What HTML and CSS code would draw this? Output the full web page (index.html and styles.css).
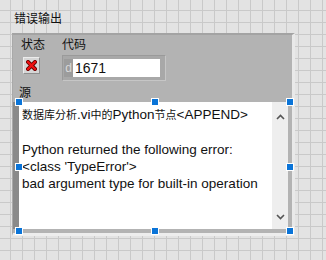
FILE: index.html
```html
<!DOCTYPE html>
<html lang="zh">
<head>
  <meta charset="UTF-8" />
  <title>错误输出</title>
  <link rel="stylesheet" href="styles.css">
</head>
<body>
  <div class="title">错误输出</div>

  <div class="cluster">
    <div class="top-row">
      <div class="field status">
        <div class="label">状态</div>
        <div class="bool">
          <svg width="11" height="11" viewBox="0 0 11 11">
            <path d="M2 2 L9 9 M9 2 L2 9" stroke="#5a0000" stroke-width="4" stroke-linecap="square"/>
            <path d="M2 2 L9 9 M9 2 L2 9" stroke="#ee1010" stroke-width="2.4" stroke-linecap="square"/>
          </svg>
        </div>
      </div>
      <div class="field code">
        <div class="label">代码</div>
        <div class="numeric">
          <span class="radix">d</span>
          <span class="value">1671</span>
        </div>
      </div>
    </div>

    <div class="label source-label">源</div>
    <div class="source">
      <div class="text">
        <div><span class="cjk">数据库分析</span>.vi<span class="cjk">中的</span>Python<span class="cjk">节点</span>&lt;APPEND&gt;</div>
        <div>&nbsp;</div>
        <div>Python returned the following error:</div>
        <div>&lt;class 'TypeError'&gt;</div>
        <div>bad argument type for built-in operation</div>
      </div>
      <div class="scroll">
        <svg width="9" height="6" viewBox="0 0 9 6"><path d="M1 5 L4.5 1.5 L8 5" fill="none" stroke="#555" stroke-width="1.6"/></svg>
        <svg width="9" height="6" viewBox="0 0 9 6"><path d="M1 1 L4.5 4.5 L8 1" fill="none" stroke="#555" stroke-width="1.6"/></svg>
      </div>

      <span class="handle h-tl"></span>
      <span class="handle h-tm"></span>
      <span class="handle h-tr"></span>
      <span class="handle h-ml"></span>
      <span class="handle h-mr"></span>
      <span class="handle h-bl"></span>
      <span class="handle h-bm"></span>
      <span class="handle h-br"></span>
    </div>
  </div>
</body>
</html>
```

FILE: styles.css
```css
body {
  margin: 0;
  width: 326px;
  height: 260px;
  font-family: "Liberation Sans", "Noto Sans CJK SC", sans-serif;
  font-size: 12px;
  color: #111;
  background-color: #e3e3e3;
  background-image:
    linear-gradient(to right, #c9c9c9 1px, transparent 1px),
    linear-gradient(to bottom, #c9c9c9 1px, transparent 1px);
  background-size: 12px 12px;
  background-position: 10px 10px;
  overflow: hidden;
}

.title {
  padding: 11px 0 0 14px;
  height: 20px;
  line-height: 17px;
}

.cluster {
  margin: 2px 0 0 12px;
  width: 279px;
  height: 198px;
  background: #b3b3b3;
  border-top: 2px solid #a3a3a3;
  border-left: 1px solid #a9a9a9;
  border-right: 3px solid #e9e9e9;
  border-bottom: 3px solid #ededed;
}

.top-row {
  display: flex;
  padding: 2px 0 0 8px;
}

.label {
  line-height: 17px;
  height: 17px;
}

.status { width: 41px; }

.bool {
  margin: 3px 0 0 2px;
  width: 15px;
  height: 15px;
  background: #d6d6d6;
  border-top: 1px solid #ececec;
  border-left: 1px solid #ececec;
  border-right: 1px solid #8f8f8f;
  border-bottom: 1px solid #8f8f8f;
  display: flex;
  align-items: center;
  justify-content: center;
}

.numeric {
  margin-top: 1px;
  width: 96px;
  height: 18px;
  padding: 3px 5px 3px 1px;
  display: flex;
  background: #a8a8a8;
  border-top: 1px solid #9a9a9a;
  border-left: 1px solid #9a9a9a;
  border-right: 1px solid #c6c6c6;
  border-bottom: 1px solid #c6c6c6;
}

.radix {
  width: 9px;
  background: #9c9c9c;
  color: #d9d9d9;
  line-height: 18px;
  font-size: 12px;
  text-align: center;
}

.value {
  flex: 1;
  background: #fff;
  line-height: 18px;
  font-size: 14px;
  padding-left: 2px;
}

.source-label {
  margin: 4px 0 0 6px;
}

.source {
  position: relative;
  width: 269px;
  height: 127px;
  display: flex;
  background: #fff;
  border-image: linear-gradient(to right, #8a8a8a, #c4c4c4) 1;
  border-width: 0 0 0 6px;
  border-style: solid;
}

.text {
  flex: 1;
  padding: 4px 0 0 3px;
  font-size: 13.5px;
  line-height: 17px;
  white-space: nowrap;
}

.cjk {
  font-size: 11px;
}

.scroll {
  width: 16px;
  background: #eeeeee;
  display: flex;
  flex-direction: column;
  justify-content: space-between;
  align-items: center;
  padding: 12px 0 9px;
}

.handle {
  position: absolute;
  width: 6px;
  height: 6px;
  background: #0a74d8;
  border: 1px solid #fff;
}

.h-tl { left: -4px; top: -4px; }
.h-tm { left: 132px; top: -4px; }
.h-tr { right: -6px; top: -4px; }
.h-ml { left: -4px; top: 61px; }
.h-mr { right: -6px; top: 61px; }
.h-bl { left: -4px; bottom: -6px; }
.h-bm { left: 132px; bottom: -6px; }
.h-br { right: -6px; bottom: -6px; }
```
